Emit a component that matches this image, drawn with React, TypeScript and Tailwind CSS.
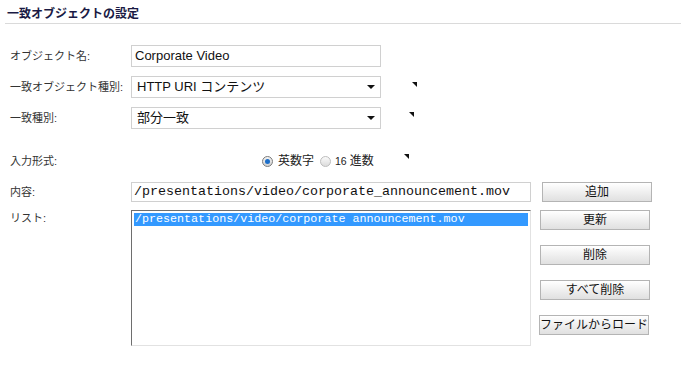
import React from 'react'

const font = "font-['Liberation_Sans','Noto_Sans_CJK_JP',sans-serif]"

function Marker({ className = '' }: { className?: string }) {
  return (
    <svg width="5" height="5" viewBox="0 0 5 5" className={`shrink-0 ${className}`}>
      <polygon points="0,0 5,0 5,5" fill="#111" />
    </svg>
  )
}

function Label({ children, className = '' }: { children: React.ReactNode; className?: string }) {
  return (
    <div className={`w-[121px] shrink-0 text-[11px] leading-[16px] text-[#333] ${className}`}>{children}</div>
  )
}

function FakeSelect({ value }: { value: string }) {
  return (
    <div className="flex h-[22px] w-[250px] items-center justify-between border border-[#d0d0d0] bg-white pl-[5px] pr-[5px] text-[13px] leading-[16px] text-[#111]">
      <span>{value}</span>
      <svg width="8" height="4" viewBox="0 0 8 4">
        <polygon points="0,0 8,0 4,4" fill="#111" />
      </svg>
    </div>
  )
}

function Radio({ checked }: { checked?: boolean }) {
  return (
    <span
      className={`flex h-[11px] w-[11px] shrink-0 items-center justify-center rounded-full border ${
        checked ? 'border-[#7a7a7a] bg-linear-to-b from-[#f4f4f4] to-[#cfcfcf]' : 'border-[#bdbdbd] bg-linear-to-b from-[#fafafa] to-[#dcdcdc]'
      }`}
    >
      {checked && <span className="h-[5px] w-[5px] rounded-full bg-[#1c6ec9]" />}
    </span>
  )
}

function Button({ children, className = '' }: { children: React.ReactNode; className?: string }) {
  return (
    <div
      className={`flex h-[20px] w-[110px] items-center justify-center border border-[#b4b4b4] bg-linear-to-b from-[#ffffff] to-[#e0e0e0] text-[12px] leading-[14px] text-[#111] ${className}`}
    >
      {children}
    </div>
  )
}

export default function App() {
  return (
    <div className={`h-[365px] w-[686px] bg-white ${font}`}>
      <div className="mx-[5px] h-[24px] border-b border-[#dadada] px-[2px] pt-[7px] text-[12px] font-bold leading-[15px] text-[#1a1a44]">
        一致オブジェクトの設定
      </div>

      <div className="pl-[10px] pt-[21px]">
        <div className="flex h-[22px] items-center">
          <Label>オブジェクト名:</Label>
          <div className="flex h-[22px] w-[250px] items-center border border-[#d0d0d0] bg-white pl-[3px] text-[13px] text-[#111]">
            Corporate Video
          </div>
        </div>

        <div className="mt-[9px] flex h-[22px] items-center">
          <Label>一致オブジェクト種別:</Label>
          <FakeSelect value="HTTP URI コンテンツ" />
          <Marker className="ml-[31px] self-start mt-[6px]" />
        </div>

        <div className="mt-[9px] flex h-[22px] items-center">
          <Label>一致種別:</Label>
          <FakeSelect value="部分一致" />
          <Marker className="ml-[28px] self-start mt-[5px]" />
        </div>

        <div className="mt-[22px] flex h-[20px] items-center">
          <Label>入力形式:</Label>
          <div className="ml-[131px] flex items-center text-[12px] leading-[16px] text-[#222]">
            <Radio checked />
            <span className="ml-[5px]">英数字</span>
            <span className="ml-[6px]">
              <Radio />
            </span>
            <span className="ml-[4px] text-[10.5px]">16</span>
            <span className="ml-[3px]">進数</span>
          </div>
          <Marker className="ml-[30px] self-start mt-[3px]" />
        </div>

        <div className="mt-[11px] flex h-[20px] items-center">
          <Label>内容:</Label>
          <div className="flex h-[20px] w-[400px] items-center border border-[#d0d0d0] bg-white pl-[2px] font-['Liberation_Mono',monospace] text-[13.33px] leading-[16px] text-[#111]">
            /presentations/video/corporate_announcement.mov
          </div>
          <Button className="ml-[11px]">追加</Button>
        </div>

        <div className="mt-[8px] flex items-start">
          <Label>リスト:</Label>
          <div className="h-[136px] w-[400px] border-t border-l border-r border-b border-t-[#6e6e6e] border-l-[#6e6e6e] border-r-[#e2e2e2] border-b-[#e2e2e2] bg-white p-[2px]">
            <div className="h-[13px] bg-[#3399ff] pl-[1px] font-['Liberation_Mono',monospace] text-[11.7px] leading-[13px] text-white">
              /presentations/video/corporate announcement.mov
            </div>
          </div>
          <div className="ml-[9px] flex flex-col gap-[15px]">
            <Button>更新</Button>
            <Button>削除</Button>
            <Button>すべて削除</Button>
            <Button className="-ml-[1px]">ファイルからロード</Button>
          </div>
        </div>
      </div>
    </div>
  )
}
